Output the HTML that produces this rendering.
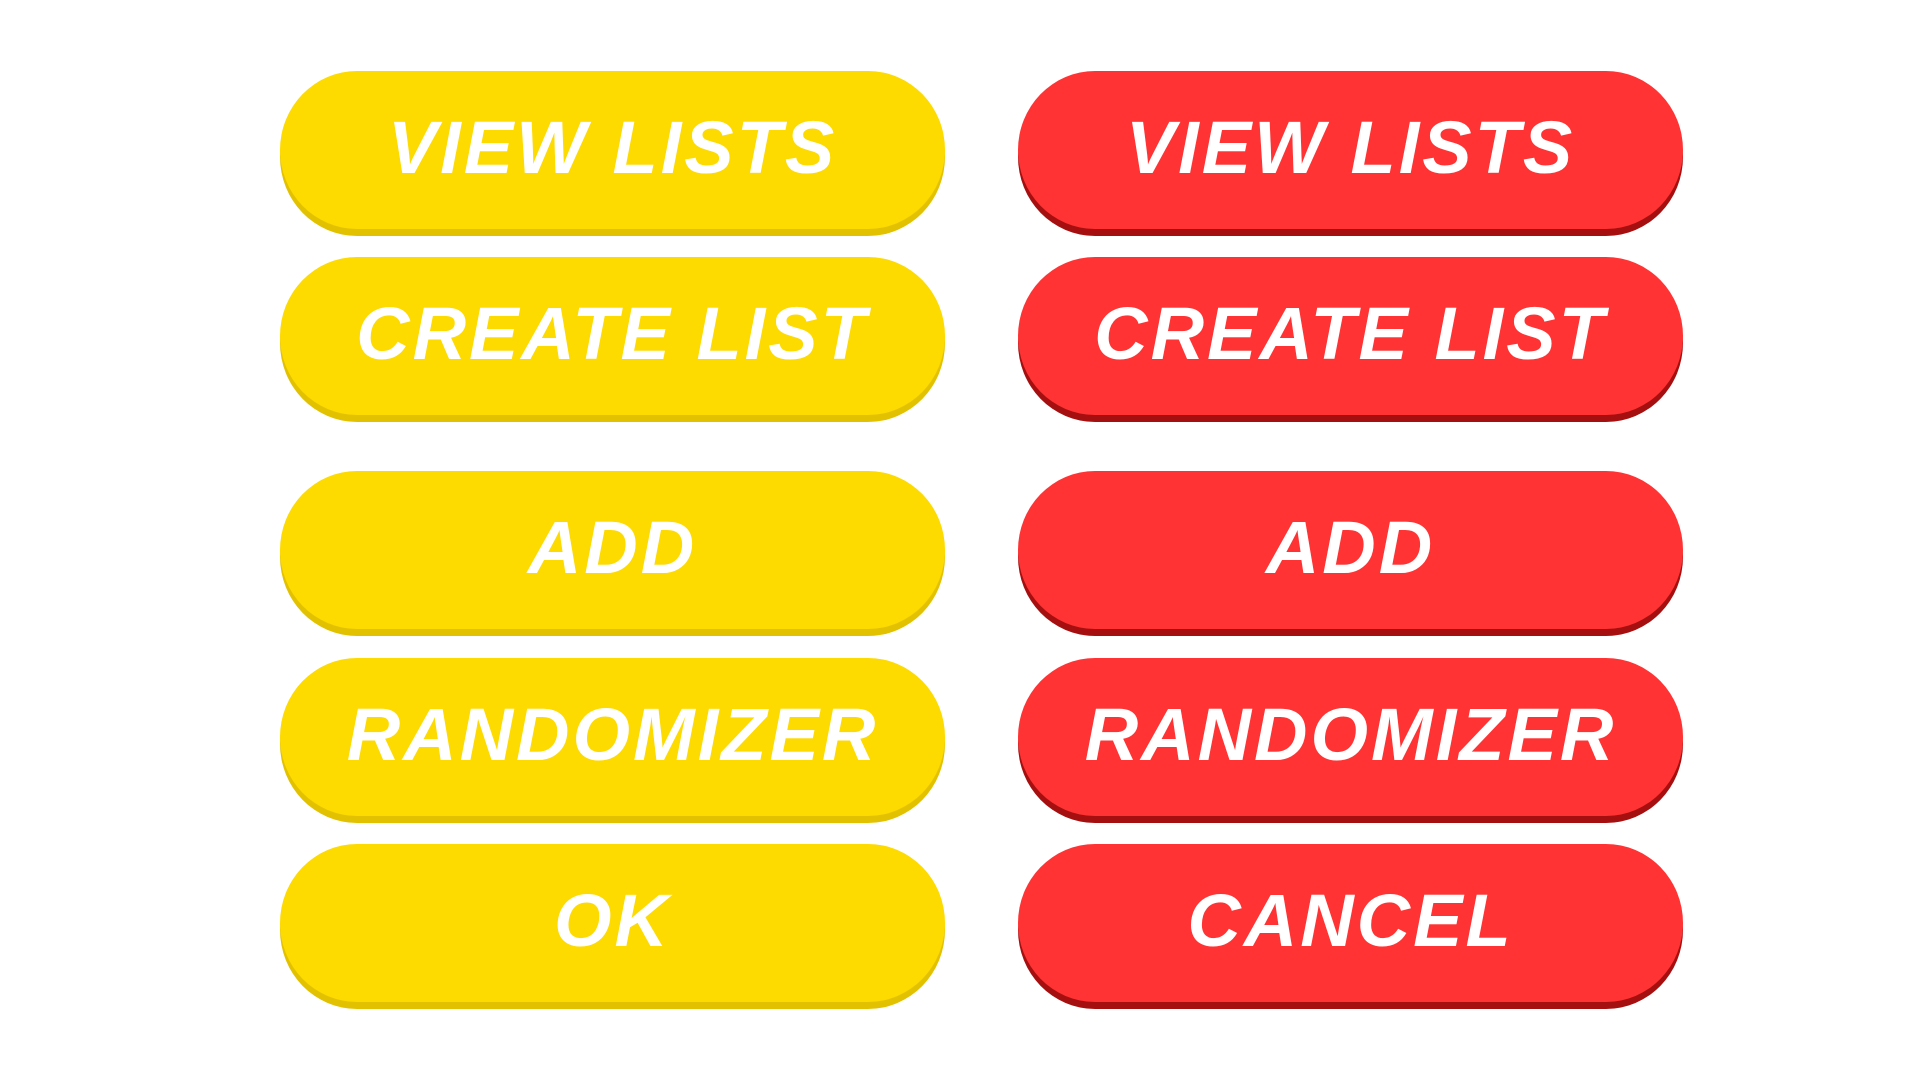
<!DOCTYPE html>
<html><head><style>
html,body{margin:0;padding:0;background:#fff;width:1920px;height:1080px;overflow:hidden}
.b{position:absolute;width:665px;height:158px;border-radius:78px/80px;display:flex;align-items:center;justify-content:center;color:#fff;font-family:"Liberation Sans",sans-serif;font-weight:bold;font-size:74px;letter-spacing:3px;padding-bottom:6px;box-sizing:border-box;font-style:italic}
.y{left:280px;background:#FDDA00;box-shadow:0 7px 0 #E2C200}
.r{left:1018px;background:#FF3333;box-shadow:0 7px 0 #A50F0F}
</style></head><body>
<div class="b y" style="top:71px">VIEW LISTS</div>
<div class="b y" style="top:257px">CREATE LIST</div>
<div class="b y" style="top:471px">ADD</div>
<div class="b y" style="top:658px">RANDOMIZER</div>
<div class="b y" style="top:844px">OK</div>
<div class="b r" style="top:71px">VIEW LISTS</div>
<div class="b r" style="top:257px">CREATE LIST</div>
<div class="b r" style="top:471px">ADD</div>
<div class="b r" style="top:658px">RANDOMIZER</div>
<div class="b r" style="top:844px">CANCEL</div>
</body></html>
